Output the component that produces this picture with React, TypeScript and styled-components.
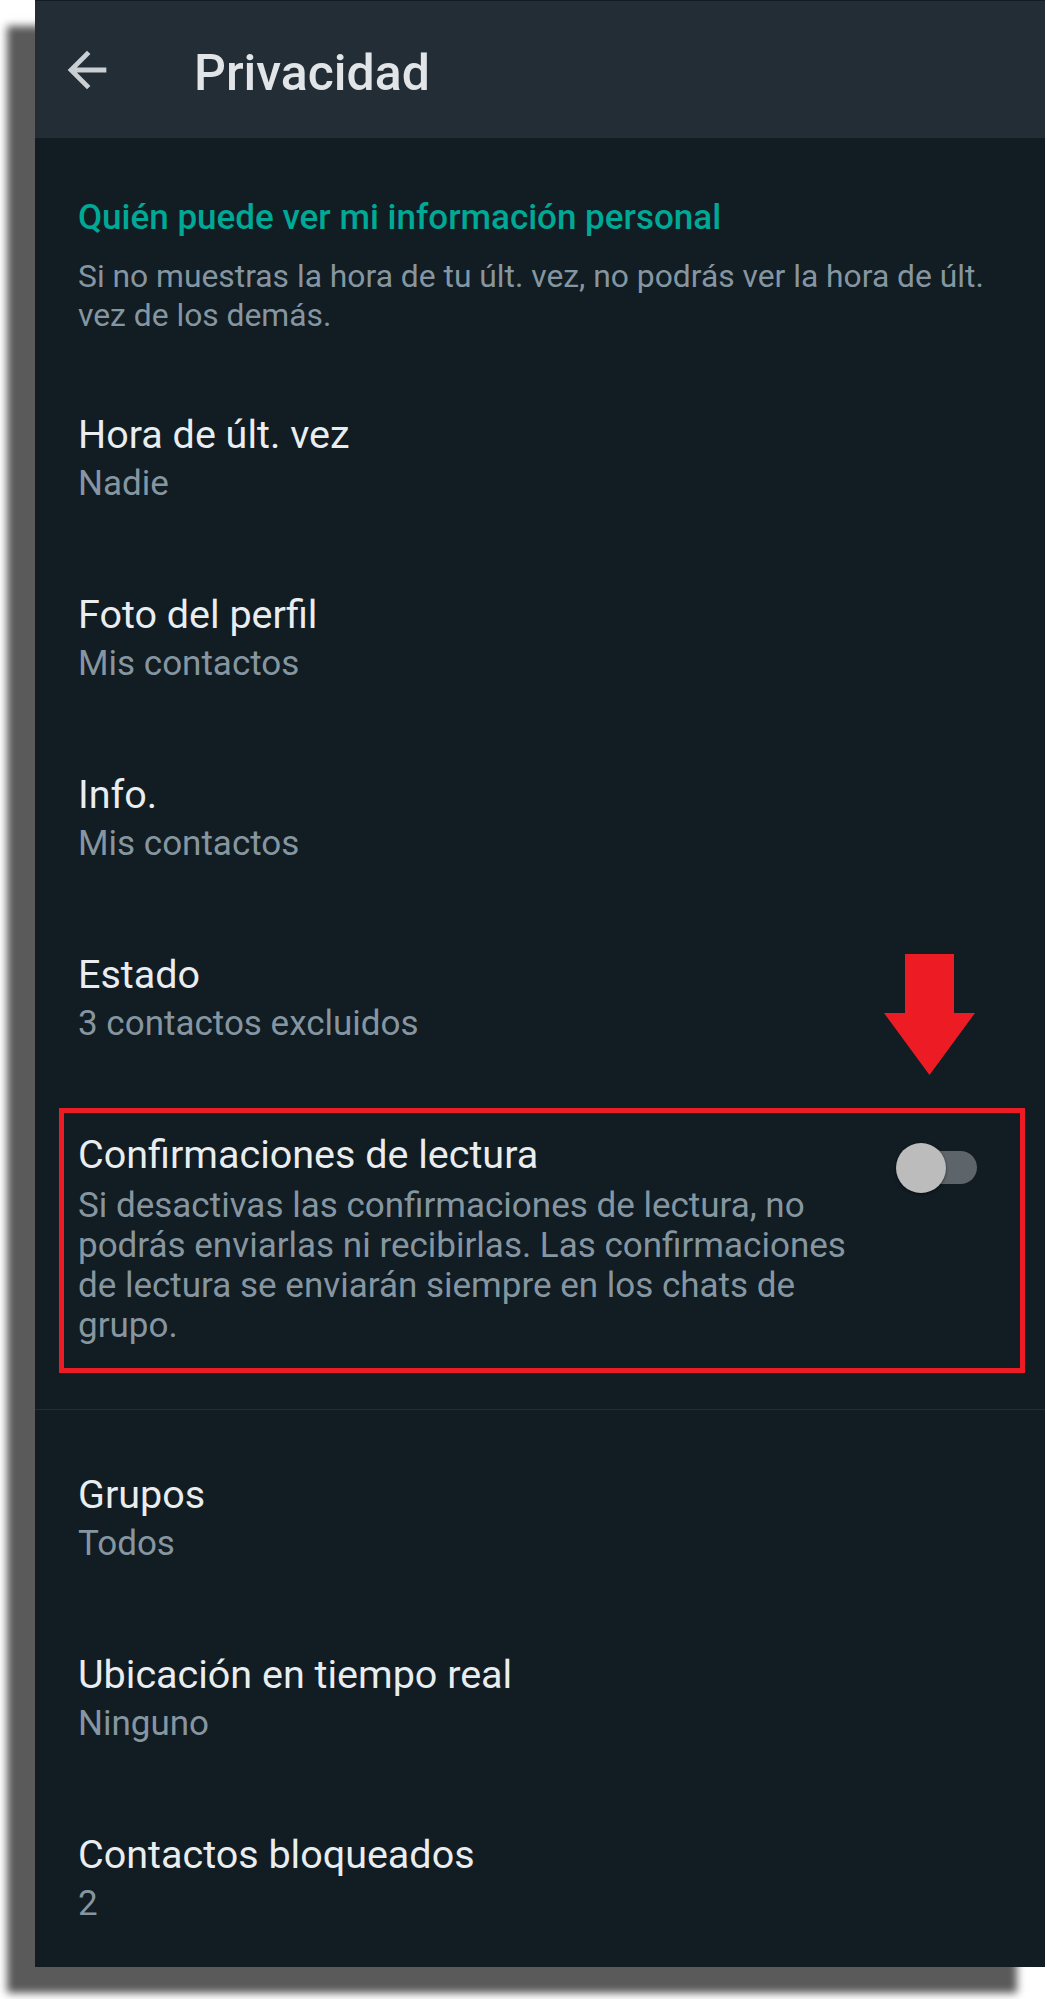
import styled, { createGlobalStyle } from 'styled-components'

const GlobalStyle = createGlobalStyle`
  html, body {
    margin: 0;
    padding: 0;
    background: #ffffff;
  }
  body {
    font-family: Roboto, 'Noto Sans', 'Liberation Sans', sans-serif;
    -webkit-font-smoothing: antialiased;
  }
`

const Page = styled.div`
  box-sizing: border-box;
  height: 1999px;
  padding: 0 2px 0 35px;
  background: #ffffff;
`

const Screen = styled.main`
  position: relative;
  height: 1967px;
  background: #111c23;
  box-shadow: -28px 26px 8px #5a5a5a;
`

const Header = styled.header`
  display: flex;
  align-items: center;
  box-sizing: border-box;
  height: 138px;
  padding-left: 23px;
  border-top: 1px solid #111c23;
  background: #232d36;
`

const BackIcon = styled.svg`
  flex: none;
  width: 58px;
  height: 58px;
  fill: #c9cfd2;
`

const Title = styled.h1`
  margin: 0 0 0 78px;
  padding-top: 6px;
  font-size: 50px;
  font-weight: 500;
  line-height: 58px;
  color: #e1e5e7;
`

const Section = styled.section`
  padding: 58px 30px 34px 43px;
`

const SectionTitle = styled.h2`
  margin: 0;
  font-size: 35px;
  font-weight: 500;
  line-height: 44px;
  color: #00a896;
`

const SectionNote = styled.p`
  margin: 17px 0 0;
  font-size: 31.8px;
  line-height: 39px;
  color: #8696a0;
`

const Row = styled.div<{ $tall?: boolean }>`
  position: relative;
  display: flex;
  align-items: flex-start;
  padding: 41px 43px ${p => (p.$tall ? '63px' : '41px')};
`

const RowText = styled.div`
  flex: 1;
  min-width: 0;
`

const RowTitle = styled.div`
  font-size: 39.5px;
  line-height: 50px;
  color: #e9edef;
`

const RowValue = styled.div`
  font-size: 35px;
  line-height: 48px;
  color: #8696a0;
`

const RowNote = styled.div`
  margin-top: 6px;
  font-size: 35px;
  line-height: 40px;
  color: #8696a0;
`

const Divider = styled.hr`
  margin: 0;
  border: none;
  height: 1px;
  background: #222d34;
`

const Group = styled.div`
  padding-top: 19px;
`

const Switch = styled.span`
  position: relative;
  flex: none;
  width: 81px;
  height: 50px;
  margin: 13px 25px 0 24px;
`

const Track = styled.span`
  position: absolute;
  left: 10px;
  right: 0;
  top: 8px;
  height: 33px;
  border-radius: 17px;
  background: #5d656b;
`

const Thumb = styled.span`
  position: absolute;
  left: 0;
  top: 0;
  width: 50px;
  height: 50px;
  border-radius: 50%;
  background: #bcbcbc;
  box-shadow: 0 1px 3px rgba(0, 0, 0, 0.55);
`

// red annotation drawn over the read receipts row
const Highlight = styled.span`
  position: absolute;
  left: 24px;
  top: 19px;
  right: 20px;
  bottom: 36px;
  box-sizing: border-box;
  border: 5px solid #ed1c24;
  pointer-events: none;
`

const Pointer = styled.svg`
  position: absolute;
  left: 849px;
  top: -135px;
  width: 91px;
  height: 121px;
  fill: #ed1c24;
`

const items = [
  { title: 'Hora de últ. vez', value: 'Nadie' },
  { title: 'Foto del perfil', value: 'Mis contactos' },
  { title: 'Info.', value: 'Mis contactos' },
  { title: 'Estado', value: '3 contactos excluidos' },
]

const moreItems = [
  { title: 'Grupos', value: 'Todos' },
  { title: 'Ubicación en tiempo real', value: 'Ninguno' },
  { title: 'Contactos bloqueados', value: '2' },
]

const App = () => {
  return (
    <Page>
      <GlobalStyle />
      <Screen>
        <Header>
          <BackIcon viewBox="0 0 24 24">
            <path d="M20 11H7.83l5.59-5.59L12 4l-8 8 8 8 1.41-1.41L7.83 13H20v-2z" />
          </BackIcon>
          <Title>Privacidad</Title>
        </Header>

        <Section>
          <SectionTitle>Quién puede ver mi información personal</SectionTitle>
          <SectionNote>
            Si no muestras la hora de tu últ. vez, no podrás ver la hora de últ. vez de los demás.
          </SectionNote>
        </Section>

        {items.map(item => (
          <Row key={item.title}>
            <RowText>
              <RowTitle>{item.title}</RowTitle>
              <RowValue>{item.value}</RowValue>
            </RowText>
          </Row>
        ))}

        <Row $tall>
          <RowText>
            <RowTitle>Confirmaciones de lectura</RowTitle>
            <RowNote>
              Si desactivas las confirmaciones de lectura, no podrás enviarlas ni recibirlas. Las
              confirmaciones de lectura se enviarán siempre en los chats de grupo.
            </RowNote>
          </RowText>
          <Switch>
            <Track />
            <Thumb />
          </Switch>
          <Highlight />
          <Pointer viewBox="0 0 91 121">
            <polygon points="21,0 70,0 70,59 91,59 45.5,121 0,59 21,59" />
          </Pointer>
        </Row>

        <Divider />

        <Group>
          {moreItems.map(item => (
            <Row key={item.title}>
              <RowText>
                <RowTitle>{item.title}</RowTitle>
                <RowValue>{item.value}</RowValue>
              </RowText>
            </Row>
          ))}
        </Group>
      </Screen>
    </Page>
  )
}

export default App
